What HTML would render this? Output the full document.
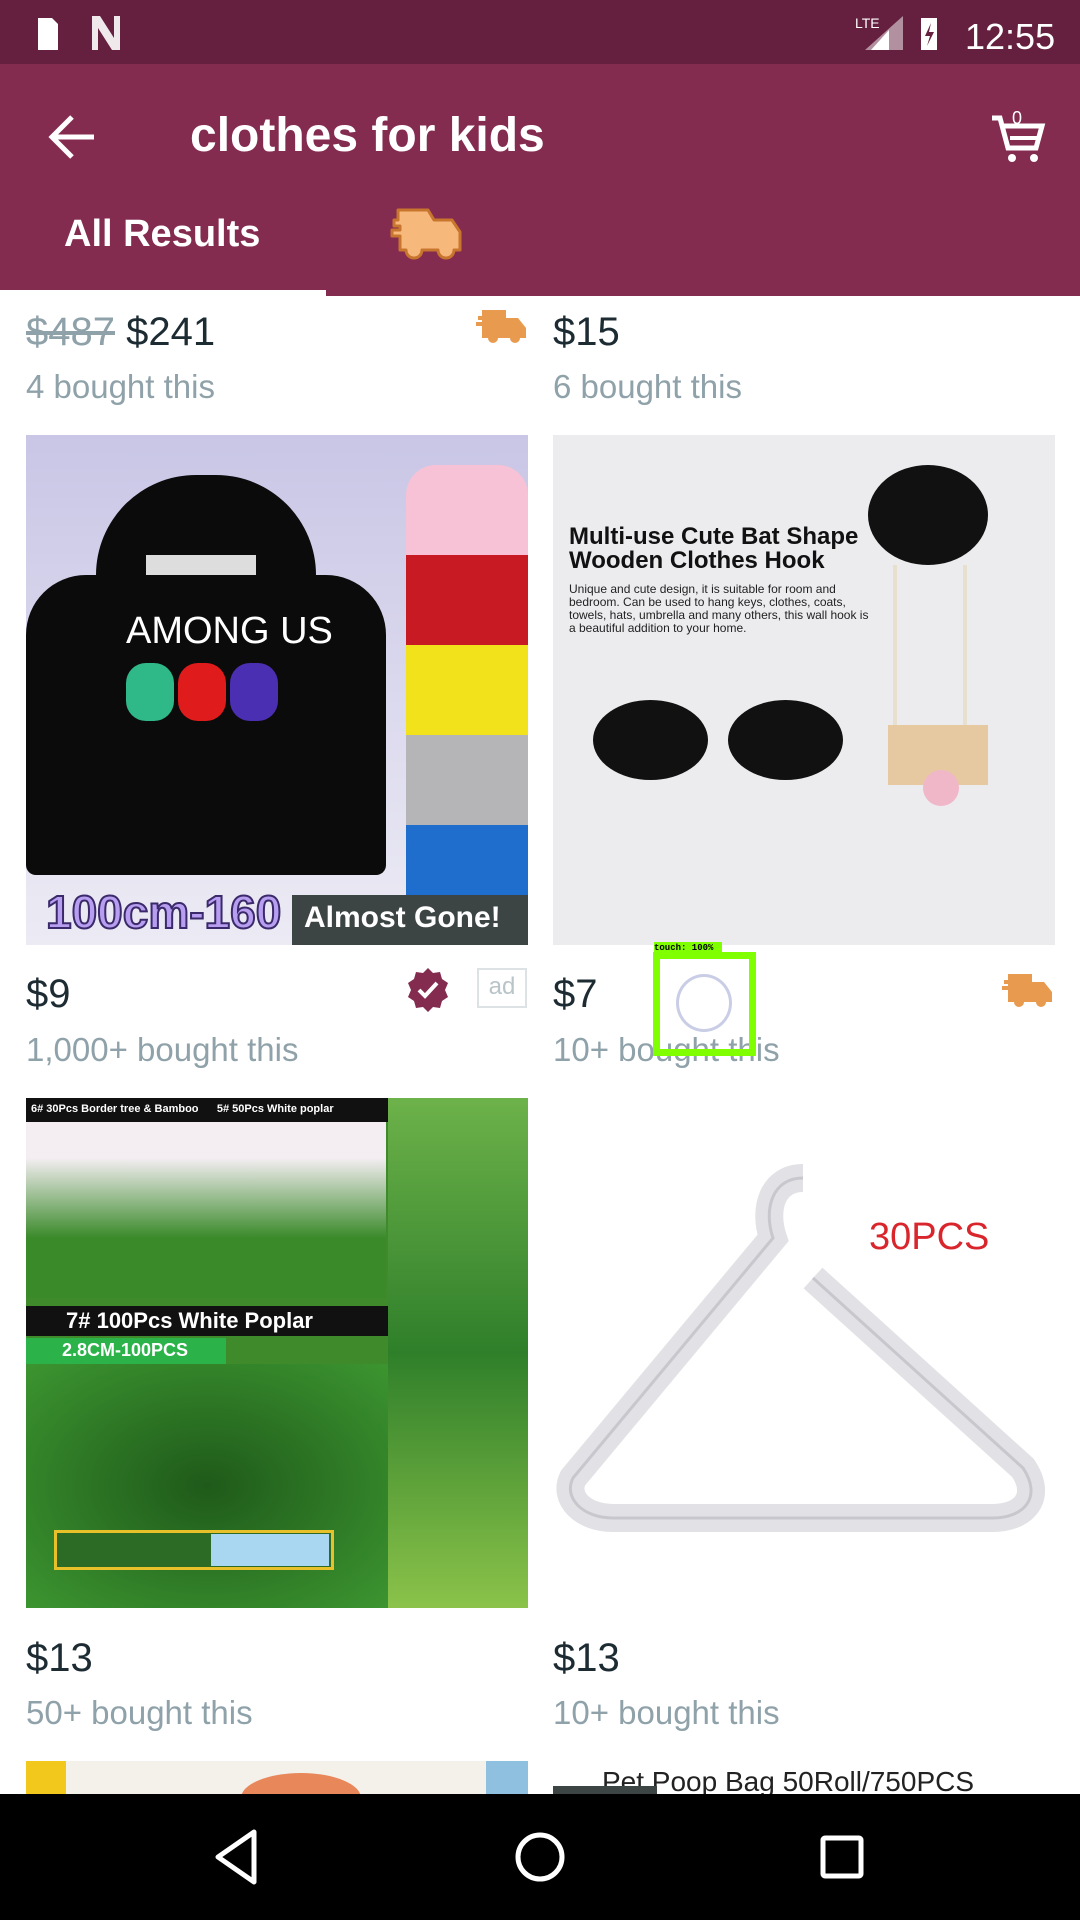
<!DOCTYPE html>
<html><head><meta charset="utf-8"><style>
*{margin:0;padding:0;box-sizing:border-box}
body{width:1080px;height:1920px;overflow:hidden;background:#fff;font-family:"Liberation Sans",sans-serif;position:relative}
.a{position:absolute}
.price{font-size:40px;color:#1d2b33}
.bought{font-size:33px;color:#8fa1a9}
</style></head><body>
<div class="a" style="left:0;top:0;width:1080px;height:64px;background:#65203f"></div>
<svg class="a" style="left:30px;top:12px" width="110" height="42"><path d="M8 6h14l6 6v26H8z" fill="#fff"/><path d="M62 4l8 0 14 22V4h6v34h-8L68 16v22h-6z" fill="#fff" opacity=".9"/></svg>
<svg class="a" style="left:855px;top:12px" width="220" height="42"><path d="M48 4v34H10z" fill="#fff" opacity=".5"/><path d="M34 18v20H16z" fill="#fff"/><text x="0" y="16" font-size="14" fill="#fff" font-family="Liberation Sans">LTE</text><rect x="66" y="6" width="16" height="32" fill="#fff"/><path d="M76 11l-6 13h5l-3 10 7-14h-5z" fill="#65203f"/><text x="110" y="37" font-size="36" fill="#fff" font-family="Liberation Sans">12:55</text></svg>
<div class="a" style="left:0;top:64px;width:1080px;height:232px;background:#842b50"></div>
<svg class="a" style="left:48px;top:114px" width="50" height="46"><path d="M4 23h42M24 3L4 23l20 20" stroke="#fff" stroke-width="5" fill="none"/></svg>
<div class="a" style="left:190px;top:108px;font-size:48px;font-weight:bold;color:#fff">clothes for kids</div>
<svg class="a" style="left:990px;top:104px" width="56" height="60"><path d="M2 14h8l8 30h28l6-22H14" stroke="#fff" stroke-width="5" fill="none"/><path d="M20 34h28" stroke="#fff" stroke-width="4"/><circle cx="22" cy="54" r="4" fill="#fff"/><circle cx="44" cy="54" r="4" fill="#fff"/><text x="22" y="20" font-size="18" fill="#fff" font-family="Liberation Sans">0</text></svg>
<div class="a" style="left:64px;top:213px;font-size:38px;font-weight:bold;color:#fff">All Results</div>
<svg class="a" style="left:388px;top:206px" width="88" height="60"><path d="M10 4h30l6 10h18l8 12v18H66a8 8 0 0 1-16 0H34a8 8 0 0 1-16 0H12V30H4v-6h8v-4H6v-6h4z" fill="#f7b87c" stroke="#c8752e" stroke-width="3" stroke-linejoin="round"/></svg>
<div class="a" style="left:0;top:290px;width:326px;height:6px;background:#fff"></div>

<div class="a price" style="left:26px;top:310px"><span style="color:#8fa1a9;text-decoration:line-through">$487</span> $241</div>
<div class="a bought" style="left:26px;top:368px">4 bought this</div>
<svg class="a" style="left:474px;top:308px" width="56" height="36"><path d="M8 2h24v8h12l8 10v10H46a5 5 0 0 1-10 0H24a5 5 0 0 1-10 0H8V18H2v-4h6v-2H4V8h4z" fill="#e89b4f"/></svg>
<div class="a price" style="left:553px;top:310px">$15</div>
<div class="a bought" style="left:553px;top:368px">6 bought this</div>

<div class="a" style="left:26px;top:435px;width:502px;height:510px;background:linear-gradient(#c9c6e6,#ecebf4);overflow:hidden">
 <div class="a" style="left:70px;top:40px;width:220px;height:120px;background:#0b0b0b;border-radius:100px 100px 0 0"></div>
 <div class="a" style="left:0;top:140px;width:360px;height:300px;background:#0b0b0b;border-radius:60px 60px 10px 10px"></div>
 <div class="a" style="left:120px;top:120px;width:110px;height:20px;background:#ddd"></div>
 <div class="a" style="left:100px;top:175px;color:#fff;font-size:38px">AMONG US</div>
 <div class="a" style="left:100px;top:228px;width:48px;height:58px;background:#2fb989;border-radius:20px"></div>
 <div class="a" style="left:152px;top:228px;width:48px;height:58px;background:#e01b1b;border-radius:20px"></div>
 <div class="a" style="left:204px;top:228px;width:48px;height:58px;background:#4b2fb3;border-radius:20px"></div>
 <div class="a" style="left:380px;top:30px;width:122px;height:90px;background:#f7c2d6;border-radius:30px 30px 0 0"></div>
 <div class="a" style="left:380px;top:120px;width:122px;height:90px;background:#c81a22"></div>
 <div class="a" style="left:380px;top:210px;width:122px;height:90px;background:#f2e21c"></div>
 <div class="a" style="left:380px;top:300px;width:122px;height:90px;background:#b5b5b8"></div>
 <div class="a" style="left:380px;top:390px;width:122px;height:80px;background:#1f6dcc"></div>
 <div class="a" style="left:20px;top:450px;font-size:46px;font-weight:bold;color:#b89ef0;-webkit-text-stroke:2px #3a2a6a">100cm-160</div>
 <div class="a" style="left:266px;top:460px;width:236px;height:50px;background:#3d4444;color:#fff;font-size:30px;font-weight:bold;padding:6px 0 0 12px">Almost Gone!</div>
</div>
<div class="a" style="left:553px;top:435px;width:502px;height:510px;background:#ececef;overflow:hidden">
 <div class="a" style="left:16px;top:90px;font-size:24px;font-weight:bold;color:#111;line-height:24px">Multi-use Cute Bat Shape<br>Wooden Clothes Hook</div>
 <div class="a" style="left:16px;top:148px;font-size:12px;color:#222;width:300px;line-height:13px">Unique and cute design, it is suitable for room and bedroom. Can be used to hang keys, clothes, coats, towels, hats, umbrella and many others, this wall hook is a beautiful addition to your home.</div>
 <div class="a" style="left:315px;top:30px;width:120px;height:100px;background:#111;border-radius:50%"></div>
 <div class="a" style="left:340px;top:130px;width:4px;height:200px;background:#e8e0cf"></div>
 <div class="a" style="left:410px;top:130px;width:4px;height:200px;background:#e8e0cf"></div>
 <div class="a" style="left:40px;top:265px;width:115px;height:80px;background:#111;border-radius:50%"></div>
 <div class="a" style="left:175px;top:265px;width:115px;height:80px;background:#111;border-radius:50%"></div>
 <div class="a" style="left:335px;top:290px;width:100px;height:60px;background:#e6c9a0"></div>
 <div class="a" style="left:370px;top:335px;width:36px;height:36px;background:#f0b7c8;border-radius:50%"></div>
</div>

<div class="a price" style="left:26px;top:972px">$9</div>
<div class="a bought" style="left:26px;top:1031px">1,000+ bought this</div>
<svg class="a" style="left:404px;top:966px" width="48" height="48"><path d="M24 2l5 5 7-1 2 7 6 4-3 7 3 7-6 4-2 7-7-1-5 5-5-5-7 1-2-7-6-4 3-7-3-7 6-4 2-7 7 1z" fill="#842b50"/><path d="M15 24l6 6 12-13" stroke="#fff" stroke-width="4" fill="none"/></svg>
<div class="a" style="left:477px;top:968px;width:50px;height:40px;border:2px solid #dde3e5;color:#b9c4c8;font-size:24px;text-align:center;line-height:34px">ad</div>
<div class="a price" style="left:553px;top:972px">$7</div>
<div class="a bought" style="left:553px;top:1031px">10+ bought this</div>
<svg class="a" style="left:1000px;top:972px" width="56" height="36"><path d="M8 2h24v8h12l8 10v10H46a5 5 0 0 1-10 0H24a5 5 0 0 1-10 0H8V18H2v-4h6v-2H4V8h4z" fill="#e89b4f"/></svg>
<div class="a" style="left:654px;top:942px;width:68px;height:12px;background:#7fff00;font-size:9px;font-family:'Liberation Mono',monospace;font-weight:bold;line-height:12px">touch: 100%</div>
<div class="a" style="left:653px;top:952px;width:103px;height:104px;border:7px solid #7fff00"></div>
<div class="a" style="left:676px;top:974px;width:56px;height:58px;border:3px solid #c9cde6;border-radius:50%"></div>

<div class="a" style="left:26px;top:1098px;width:502px;height:510px;background:#3f8a2a;overflow:hidden">
 <div class="a" style="left:0;top:0;width:360px;height:200px;background:linear-gradient(#f4eef2 30%,#3a8a2a 70%)"></div>
 <div class="a" style="left:0;top:0;width:502px;height:24px;background:#111;color:#fff;font-size:11px;font-weight:bold;padding:5px;white-space:nowrap">6# 30Pcs Border tree &amp; Bamboo &nbsp;&nbsp;&nbsp;&nbsp; 5# 50Pcs White poplar</div>
 <div class="a" style="left:0;top:208px;width:362px;height:30px;background:#111;color:#fff;font-size:22px;font-weight:bold;padding:2px 40px">7# 100Pcs White Poplar</div>
 <div class="a" style="left:0;top:240px;width:200px;height:26px;background:#2bb34a;color:#fff;font-size:18px;font-weight:bold;padding:2px 36px">2.8CM-100PCS</div>
 <div class="a" style="left:0;top:266px;width:362px;height:244px;background:radial-gradient(#1f5a1a,#3c9530)"></div>
 <div class="a" style="left:28px;top:432px;width:280px;height:40px;border:3px solid #e8c02a;background:#2c6b25"></div>
 <div class="a" style="left:185px;top:436px;width:118px;height:32px;background:#a9d6f0"></div>
 <div class="a" style="left:362px;top:0;width:140px;height:510px;background:linear-gradient(#6db24a,#2f7f2a,#8bc34a)"></div>
</div>
<div class="a" style="left:553px;top:1098px;width:502px;height:510px;background:#fff;overflow:hidden">
 <div class="a" style="left:316px;top:118px;font-size:38px;color:#d9262c">30PCS</div>
 <svg class="a" style="left:0;top:60px" width="502" height="420"><path d="M250 20c-30 0-40 30-30 60L20 320c-10 20 10 40 40 40h380c30 0 50-20 30-50L260 120" stroke="#e2e2e6" stroke-width="28" fill="none"/><path d="M250 20c-30 0-40 30-30 60L20 320c-10 20 10 40 40 40h380c30 0 50-20 30-50L260 120" stroke="#c7c7cd" stroke-width="3" fill="none"/></svg>
</div>

<div class="a price" style="left:26px;top:1636px">$13</div>
<div class="a bought" style="left:26px;top:1694px">50+ bought this</div>
<div class="a price" style="left:553px;top:1636px">$13</div>
<div class="a bought" style="left:553px;top:1694px">10+ bought this</div>

<div class="a" style="left:26px;top:1761px;width:502px;height:40px;background:#f4f0ea;overflow:hidden">
 <div class="a" style="left:0;top:0;width:40px;height:40px;background:#f2c81c"></div>
 <div class="a" style="left:215px;top:12px;width:120px;height:50px;background:#e8875a;border-radius:50%"></div>
 <div class="a" style="left:460px;top:0;width:42px;height:40px;background:#8fc0df"></div>
</div>
<div class="a" style="left:602px;top:1766px;font-size:28px;color:#222">Pet Poop Bag 50Roll/750PCS</div>
<div class="a" style="left:553px;top:1786px;width:104px;height:10px;background:#3d4444"></div>

<div class="a" style="left:0;top:1794px;width:1080px;height:126px;background:#000"></div>
<svg class="a" style="left:0;top:1794px" width="1080" height="126"><path d="M254 38L218 63l36 25z" stroke="#fff" stroke-width="5" fill="none" stroke-linejoin="round"/><circle cx="540" cy="63" r="22" stroke="#fff" stroke-width="5" fill="none"/><rect x="823" y="44" width="38" height="38" rx="2" stroke="#fff" stroke-width="5" fill="none"/></svg>
</body></html>
